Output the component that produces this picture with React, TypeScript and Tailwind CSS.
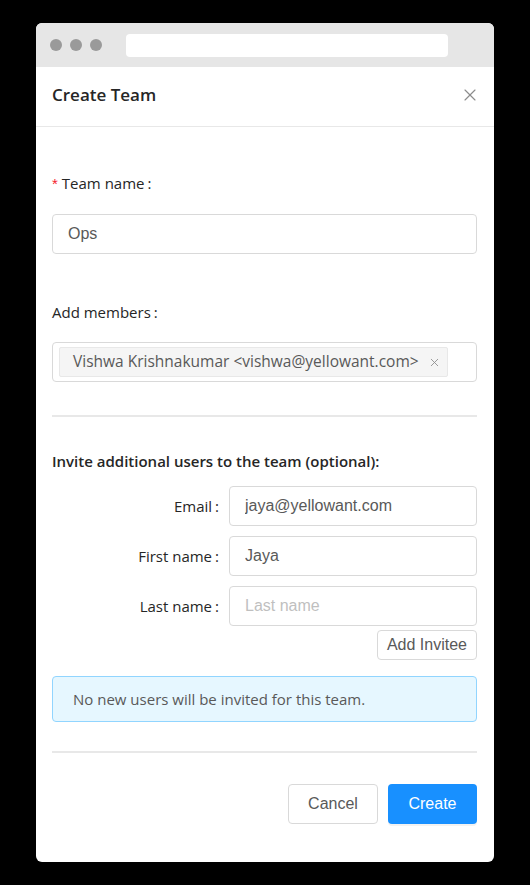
import { X } from "lucide-react";

const label = "font-['Open_Sans',sans-serif] text-[15px] text-[#262626]";
const input =
  "h-10 w-full rounded-[4px] border border-[#d9d9d9] bg-white px-[15px] font-['Liberation_Sans',Arial,sans-serif] text-[16px] text-[#595959] outline-none placeholder:text-[#bfbfbf]";

function Row({ name, value, placeholder }: { name: string; value?: string; placeholder?: string }) {
  return (
    <div className="flex items-center">
      <label className={`${label} w-[167px] shrink-0 text-right`}>
        {name}
        <span className="ml-[3px]">:</span>
      </label>
      <input className={`${input} ml-[10px] flex-1`} defaultValue={value} placeholder={placeholder} />
    </div>
  );
}

export default function App() {
  return (
    <div className="flex min-h-[885px] w-full justify-center bg-black pt-[23px]">
      <div className="flex h-[839px] w-[458px] flex-col overflow-hidden rounded-[6px] bg-white">
        {/* browser chrome */}
        <div className="flex h-[44px] shrink-0 items-center bg-[#e6e6e6] pl-[14px] pr-[46px]">
          <div className="flex gap-[8px]">
            <span className="h-3 w-3 rounded-full bg-[#9a9a9a]" />
            <span className="h-3 w-3 rounded-full bg-[#9a9a9a]" />
            <span className="h-3 w-3 rounded-full bg-[#9a9a9a]" />
          </div>
          <div className="ml-[24px] h-[23px] flex-1 rounded-[4px] bg-white" />
        </div>

        {/* modal header */}
        <div className="flex h-[60px] shrink-0 items-center justify-between border-b border-[#e8e8e8] pb-[3px] pl-4 pr-[14px]">
          <h1 className="font-['Open_Sans',sans-serif] text-[17px] font-semibold text-[#262626]">Create Team</h1>
          <X className="h-[20px] w-[20px] text-[#8c8c8c]" strokeWidth={1.4} />
        </div>

        {/* body */}
        <div className="flex flex-col pl-4 pr-[17px] pt-[45px]">
          <div className={`${label} leading-[22px]`}>
            <span className="mr-[4px] font-['Liberation_Sans',sans-serif] text-[#f5222d]">*</span>
            Team name<span className="ml-[3px]">:</span>
          </div>
          <input className={`${input} mt-[19px]`} defaultValue="Ops" />

          <div className={`${label} mt-[47px] leading-[22px]`}>
            Add members<span className="ml-[3px]">:</span>
          </div>
          <div className="mt-[19px] flex h-10 items-center rounded-[4px] border border-[#d9d9d9] px-[6px]">
            <span className="flex h-[30px] items-center gap-[9px] rounded-[2px] border border-[#e8e8e8] bg-[#f5f5f5] pl-[13px] pr-[6px] font-['Open_Sans',sans-serif] text-[15.5px] text-[#595959]">
              Vishwa Krishnakumar &lt;vishwa@yellowant.com&gt;
              <X className="h-[13px] w-[13px] text-[#8c8c8c]" strokeWidth={1.6} />
            </span>
          </div>

          <div className="mt-[33px] h-[2px] bg-[#e8e8e8]" />

          <div className={`${label} mt-[33px] text-[15.3px] font-semibold leading-[22px]`}>
            Invite additional users to the team (optional):
          </div>

          <div className="mt-[14px] flex flex-col gap-[10px]">
            <Row name="Email" value="jaya@yellowant.com" />
            <Row name="First name" value="Jaya" />
            <Row name="Last name" placeholder="Last name" />
          </div>

          <div className="mt-[4px] flex justify-end">
            <button className="h-[30px] rounded-[4px] border border-[#d9d9d9] bg-white px-[9px] font-['Liberation_Sans',Arial,sans-serif] text-[16px] text-[#595959]">
              Add Invitee
            </button>
          </div>

          <div className="mt-[16px] flex h-[46px] items-center rounded-[4px] border border-[#91d5ff] bg-[#e6f7ff] px-[20px] font-['Open_Sans',sans-serif] text-[15px] text-[#595959]">
            No new users will be invited for this team.
          </div>

          <div className="mt-[29px] h-[2px] bg-[#e8e8e8]" />

          <div className="mt-[31px] flex justify-end gap-[10px]">
            <button className="h-10 w-[90px] rounded-[4px] border border-[#d9d9d9] bg-white font-['Liberation_Sans',Arial,sans-serif] text-[16px] text-[#595959]">
              Cancel
            </button>
            <button className="h-10 w-[89px] rounded-[4px] bg-[#1890ff] font-['Liberation_Sans',Arial,sans-serif] text-[16px] text-white shadow-[0_2px_0_rgba(0,0,0,0.05)]">
              Create
            </button>
          </div>
        </div>
      </div>
    </div>
  );
}
